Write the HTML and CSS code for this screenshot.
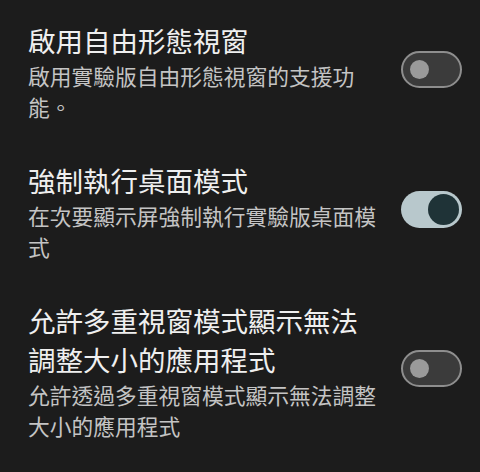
FILE: index.html
```html
<!DOCTYPE html>
<html lang="zh-Hant">
<head>
<meta charset="utf-8">
<link rel="stylesheet" href="styles.css">
</head>
<body>
<div class="list">
  <div class="row">
    <div class="text">
      <div class="title">啟用自由形態視窗</div>
      <div class="summary">啟用實驗版自由形態視窗的支援功能。</div>
    </div>
    <div class="switch off"><div class="knob"></div></div>
  </div>
  <div class="row">
    <div class="text">
      <div class="title">強制執行桌面模式</div>
      <div class="summary">在次要顯示屏強制執行實驗版桌面模式</div>
    </div>
    <div class="switch on"><div class="knob"></div></div>
  </div>
  <div class="row">
    <div class="text">
      <div class="title">允許多重視窗模式顯示無法調整大小的應用程式</div>
      <div class="summary">允許透過多重視窗模式顯示無法調整大小的應用程式</div>
    </div>
    <div class="switch off"><div class="knob"></div></div>
  </div>
</div>
</body>
</html>
```
FILE: styles.css
```css
html, body {
  margin: 0;
  padding: 0;
  background: #1c1c1c;
  width: 480px;
  height: 472px;
  overflow: hidden;
}
body {
  font-family: "Noto Sans CJK TC", "Noto Sans", sans-serif;
}
.list {
  padding-top: 1px;
  display: flex;
  flex-direction: column;
}
.row {
  display: flex;
  align-items: center;
  padding: 19.5px 0 19.5px 28px;
}
.text {
  width: 352px;
  flex: none;
}
.title {
  font-size: 27.5px;
  line-height: 39px;
  color: #efefef;
}
.summary {
  font-size: 21.75px;
  line-height: 31px;
  color: #c4c4c4;
}
.switch {
  margin-left: 21px;
  margin-bottom: 4px;
  width: 61px;
  height: 37px;
  box-sizing: border-box;
  border-radius: 19px;
  display: flex;
  align-items: center;
  flex: none;
}
.switch.off {
  background: #3b3b3b;
  border: 2.5px solid #8e8e8e;
  padding-left: 7px;
}
.switch.off .knob {
  width: 19px;
  height: 19px;
  border-radius: 50%;
  background: #9a9a9a;
}
.switch.on {
  background: #b8c8cc;
  justify-content: flex-end;
  padding-right: 3px;
}
.switch.on .knob {
  width: 31px;
  height: 31px;
  border-radius: 50%;
  background: #1f3337;
}
```
